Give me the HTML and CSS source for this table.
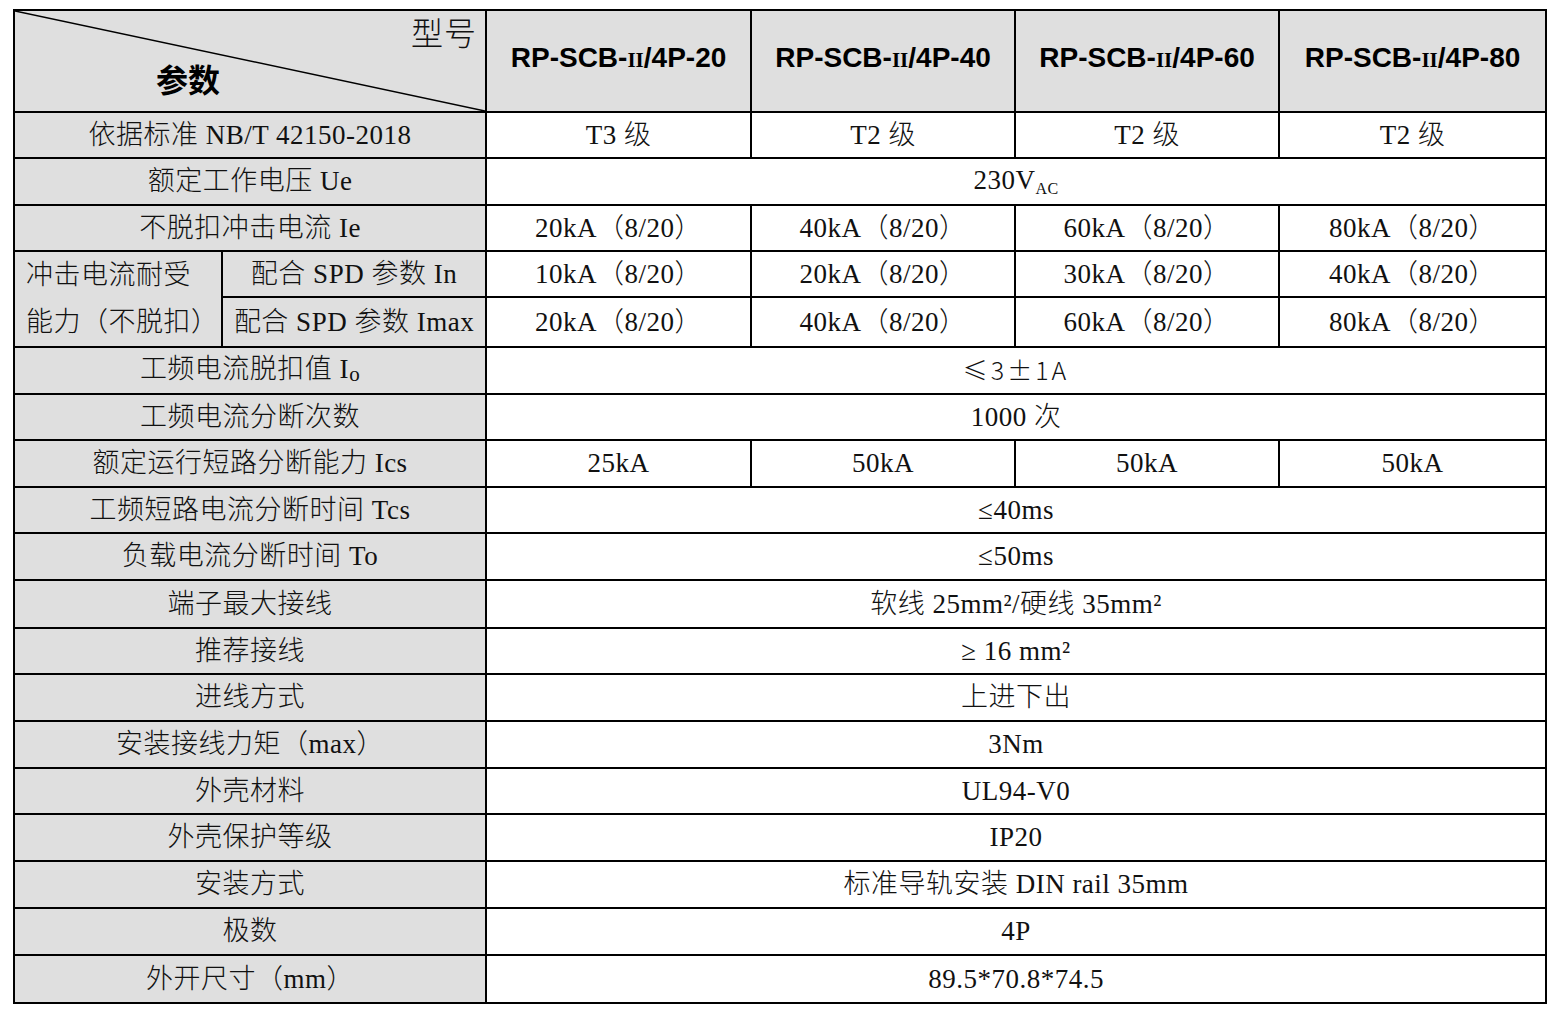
FILE: index.html
```
<!DOCTYPE html>
<html lang="zh">
<head>
<meta charset="utf-8">
<title>参数表</title>
<link rel="stylesheet" href="styles.css">
</head>
<body>
<table class="spec">
  <colgroup>
    <col class="c-sub1"><col class="c-sub2">
    <col class="c-m1"><col class="c-m2"><col class="c-m3"><col class="c-m4">
  </colgroup>
  <tr class="r-head">
    <td colspan="2" class="g diag">
      <svg class="diag-line" viewBox="0 0 100 100" preserveAspectRatio="none"><line x1="0" y1="0" x2="100" y2="100" vector-effect="non-scaling-stroke"/></svg>
      <div class="diag-in">
        <span class="xh">型号</span>
        <span class="cs">参数</span>
      </div>
    </td>
    <td class="g model">RP-SCB-<span class="roman">II</span>/4P-20</td>
    <td class="g model">RP-SCB-<span class="roman">II</span>/4P-40</td>
    <td class="g model">RP-SCB-<span class="roman">II</span>/4P-60</td>
    <td class="g model">RP-SCB-<span class="roman">II</span>/4P-80</td>
  </tr>
  <tr class="r46">
    <td colspan="2" class="g">依据标准 NB/T 42150-2018</td>
    <td>T3 级</td><td>T2 级</td><td>T2 级</td><td>T2 级</td>
  </tr>
  <tr class="r47">
    <td colspan="2" class="g">额定工作电压 Ue</td>
    <td colspan="4">230V<sub>AC</sub></td>
  </tr>
  <tr class="r46">
    <td colspan="2" class="g">不脱扣冲击电流 Ie</td>
    <td>20kA（8/20）</td><td>40kA（8/20）</td><td>60kA（8/20）</td><td>80kA（8/20）</td>
  </tr>
  <tr class="r46">
    <td rowspan="2" class="g left">冲击电流耐受<br>能力（不脱扣）</td>
    <td class="g">配合 SPD 参数 In</td>
    <td>10kA（8/20）</td><td>20kA（8/20）</td><td>30kA（8/20）</td><td>40kA（8/20）</td>
  </tr>
  <tr class="r49">
    <td class="g">配合 SPD 参数 Imax</td>
    <td>20kA（8/20）</td><td>40kA（8/20）</td><td>60kA（8/20）</td><td>80kA（8/20）</td>
  </tr>
  <tr class="r47">
    <td colspan="2" class="g">工频电流脱扣值 I<span class="lo">o</span></td>
    <td colspan="4"><span class="wide">≤3±1A</span></td>
  </tr>
  <tr class="r46">
    <td colspan="2" class="g">工频电流分断次数</td>
    <td colspan="4">1000 次</td>
  </tr>
  <tr class="r47">
    <td colspan="2" class="g">额定运行短路分断能力 Ics</td>
    <td>25kA</td><td>50kA</td><td>50kA</td><td>50kA</td>
  </tr>
  <tr class="r46">
    <td colspan="2" class="g">工频短路电流分断时间 Tcs</td>
    <td colspan="4">≤40ms</td>
  </tr>
  <tr class="r47">
    <td colspan="2" class="g">负载电流分断时间 To</td>
    <td colspan="4">≤50ms</td>
  </tr>
  <tr class="r48">
    <td colspan="2" class="g">端子最大接线</td>
    <td colspan="4">软线 25mm²/硬线 35mm²</td>
  </tr>
  <tr class="r46">
    <td colspan="2" class="g">推荐接线</td>
    <td colspan="4">≥ 16 mm²</td>
  </tr>
  <tr class="r47">
    <td colspan="2" class="g">进线方式</td>
    <td colspan="4">上进下出</td>
  </tr>
  <tr class="r47">
    <td colspan="2" class="g">安装接线力矩（max）</td>
    <td colspan="4">3Nm</td>
  </tr>
  <tr class="r46">
    <td colspan="2" class="g">外壳材料</td>
    <td colspan="4">UL94-V0</td>
  </tr>
  <tr class="r47">
    <td colspan="2" class="g">外壳保护等级</td>
    <td colspan="4">IP20</td>
  </tr>
  <tr class="r47">
    <td colspan="2" class="g">安装方式</td>
    <td colspan="4">标准导轨安装 DIN rail 35mm</td>
  </tr>
  <tr class="r47">
    <td colspan="2" class="g">极数</td>
    <td colspan="4">4P</td>
  </tr>
  <tr class="r48">
    <td colspan="2" class="g">外开尺寸（mm）</td>
    <td colspan="4">89.5*70.8*74.5</td>
  </tr>
</table>
</body>
</html>
```
FILE: styles.css
```
html, body {
  margin: 0;
  padding: 0;
  background: #fff;
}

.spec {
  margin: 9px 0 0 13px;
  border-collapse: collapse;
  table-layout: fixed;
  width: 1532px;
  font-family: "Liberation Serif", "Noto Sans CJK SC", serif;
  font-size: 27px;
  font-weight: 300;
  letter-spacing: 0.5px;
  color: #111;
}

.c-sub1 { width: 208px; }
.c-sub2 { width: 264px; }
.c-m1 { width: 265px; }
.c-m2 { width: 264px; }
.c-m3 { width: 264px; }
.c-m4 { width: 267px; }

.spec td {
  border: 2px solid #000;
  padding: 0;
  text-align: center;
  vertical-align: middle;
  line-height: 1;
  white-space: nowrap;
}

.spec td.g { background: #dfdfdf; }
.spec td.left {
  text-align: left;
  padding-left: 11px;
  line-height: 47px;
}

.r-head td { height: 100px; }
.r46 td { height: 44px; }
.r47 td { height: 45px; }
.r48 td { height: 46px; }
.r49 td { height: 47px; }

.spec .r-head td.model {
  height: 94px;
  padding-bottom: 6px;
  font-family: "Liberation Sans", Arial, sans-serif;
  font-weight: 700;
  font-size: 28px;
  letter-spacing: 0;
  color: #000;
}

.roman {
  font-family: "Liberation Serif", serif;
  font-weight: 700;
  font-size: 21px;
}

.diag { position: relative; }

.diag-line {
  position: absolute;
  left: 0;
  top: 0;
  width: 100%;
  height: 100%;
}
.diag-line line {
  stroke: #000;
  stroke-width: 1.5;
}

.diag-in {
  display: flex;
  flex-direction: column;
  height: 100px;
}

.xh {
  align-self: flex-end;
  margin: 7px 8px 0 0;
  font-size: 32px;
  letter-spacing: 1px;
}

.cs {
  align-self: flex-start;
  margin: 12px 0 0 141px;
  font-family: "Noto Sans CJK SC", sans-serif;
  font-weight: 700;
  font-size: 32px;
  letter-spacing: 0;
  color: #000;
}

sub {
  font-size: 16px;
  vertical-align: -5px;
}

.lo {
  font-size: 21px;
  vertical-align: -3px;
}

.wide {
  font-family: "Noto Sans CJK SC", sans-serif;
  font-weight: 300;
  font-size: 25px;
  letter-spacing: 3px;
}
```
